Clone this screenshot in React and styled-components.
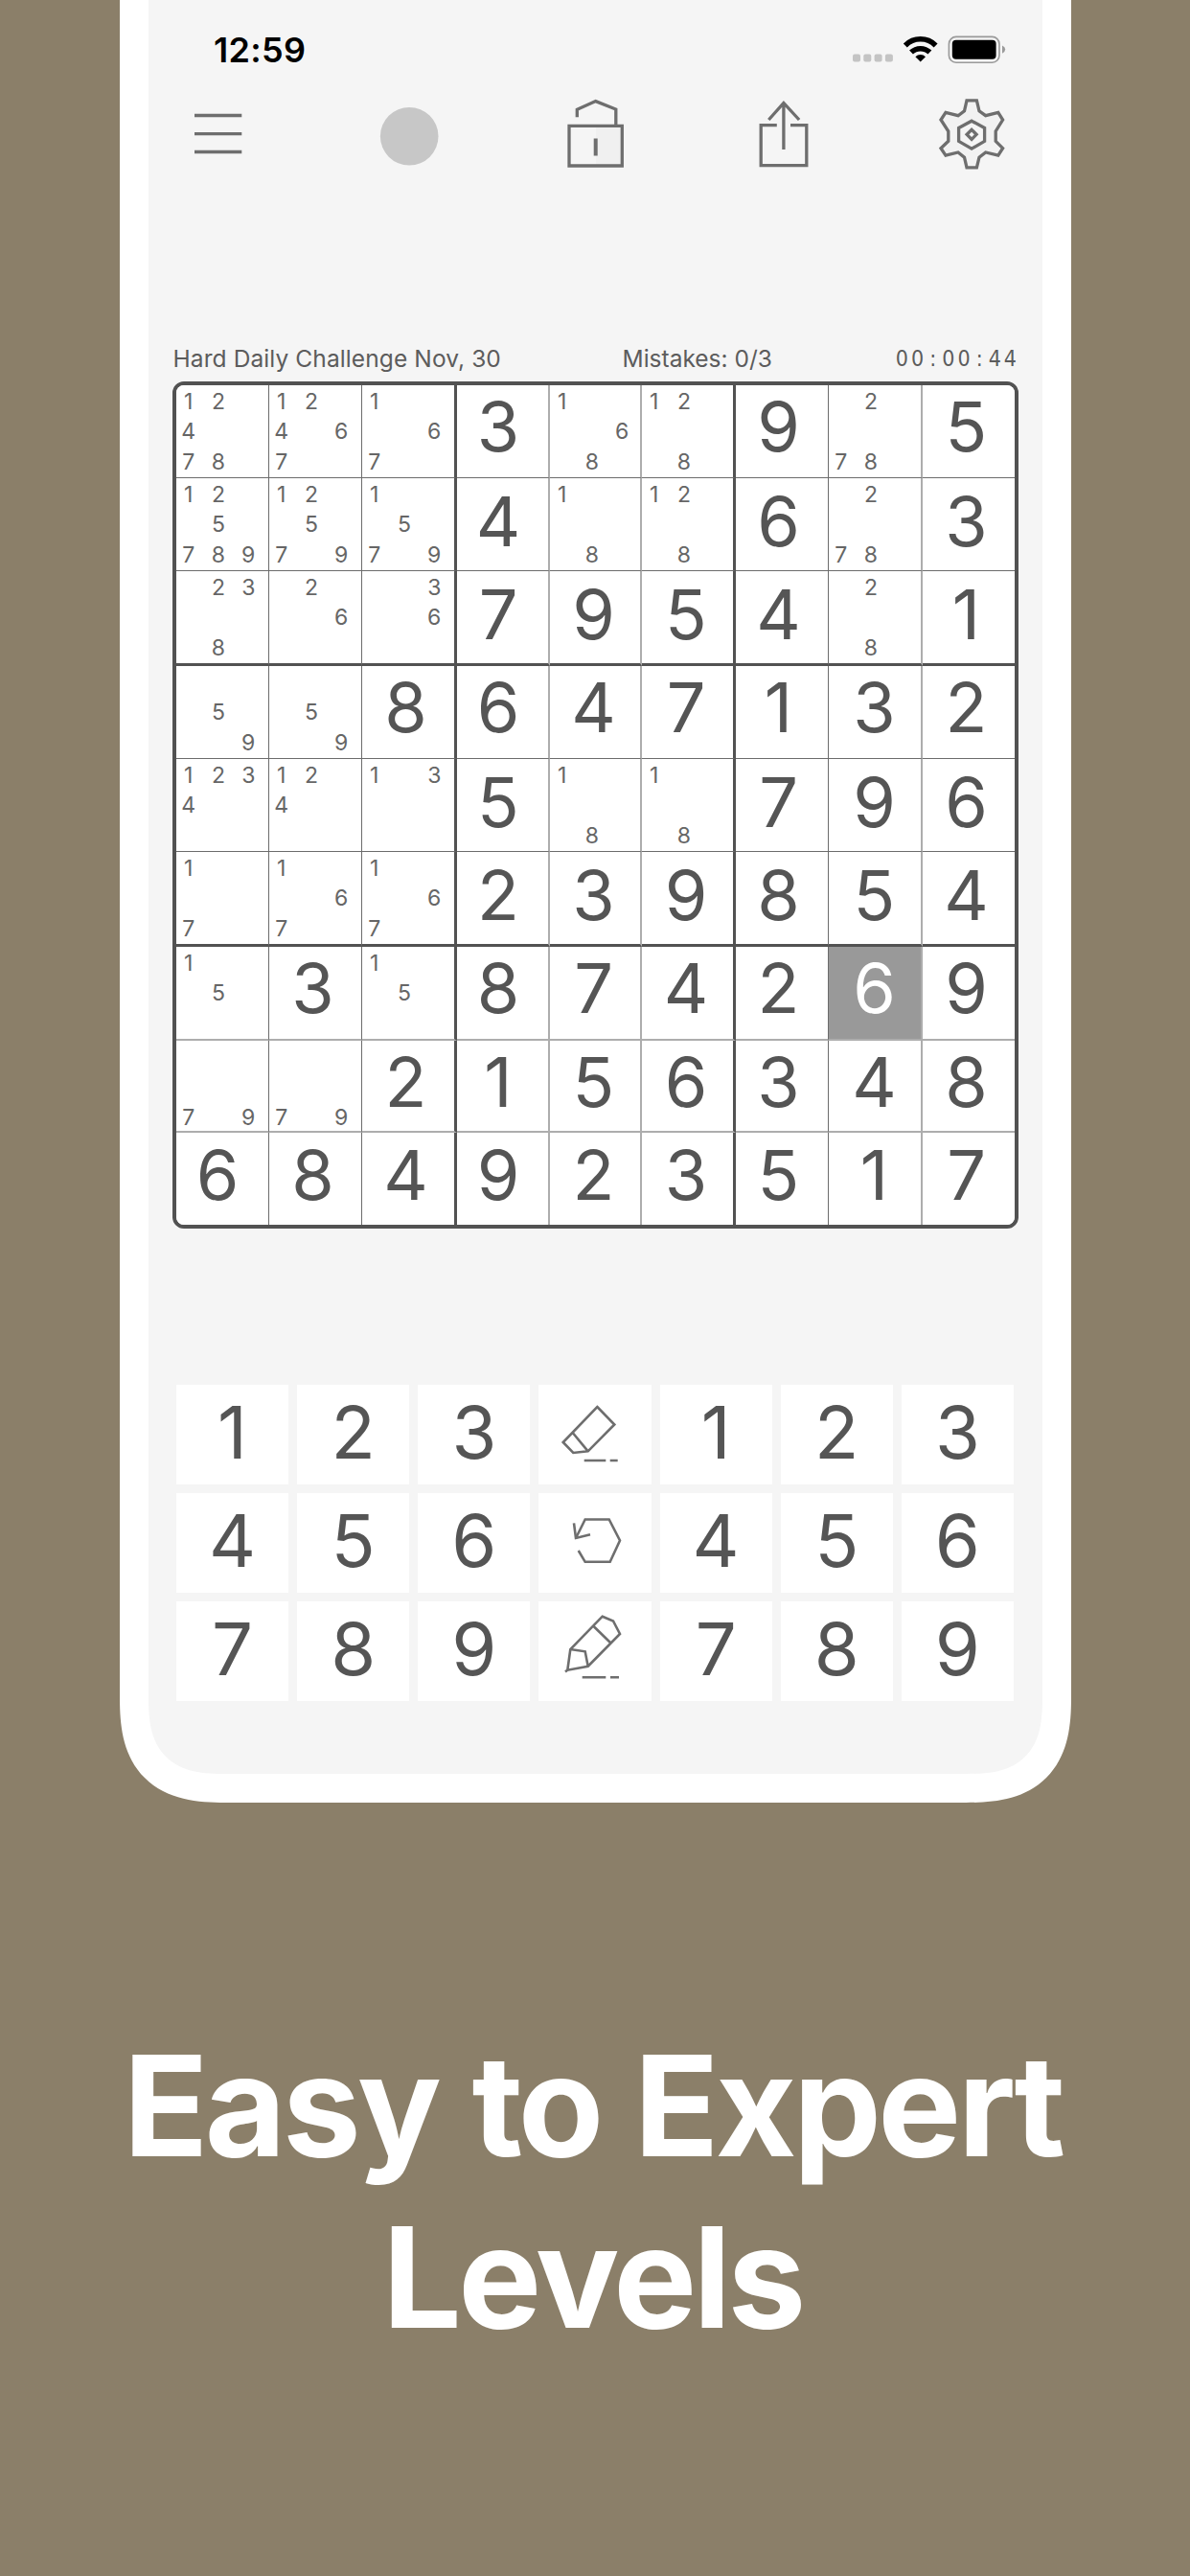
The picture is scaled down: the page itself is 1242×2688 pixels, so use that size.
import React from 'react';
import styled, { createGlobalStyle } from 'styled-components';

const GlobalStyle = createGlobalStyle`
  * {
    box-sizing: border-box;
  }

  body {
    margin: 0;
    background: #8b7f69;
    font-family: Inter, 'Liberation Sans', sans-serif;
    -webkit-font-smoothing: antialiased;
  }
`;

const Page = styled.main`
  display: flex;
  flex-direction: column;
  align-items: center;
  width: 1242px;
  height: 2688px;
  overflow: hidden;
  background: #8b7f69;
`;

const Phone = styled.section`
  width: 993px;
  height: 1881px;
  padding: 0 30px 30px;
  background: #fff;
  border-radius: 0 0 110px 110px;
  corner-shape: superellipse(1.365);
`;

const Screen = styled.div`
  height: 1851px;
  background: #f5f5f5;
  border-radius: 0 0 80px 80px;
  corner-shape: superellipse(1.44);
`;

const StatusBar = styled.header`
  display: flex;
  align-items: flex-start;
  justify-content: space-between;
  height: 96px;
  padding: 30px 36.5px 0 68.5px;
`;

const Clock = styled.time`
  font-size: 36px;
  line-height: 44px;
  font-weight: 600;
  letter-spacing: 0.3px;
  color: #000;
`;

const StatusIcons = styled.svg`
  display: block;
  width: 163px;
  height: 40px;
`;

const Toolbar = styled.nav`
  display: flex;
  justify-content: space-between;
  height: 88px;
  padding: 0 37.5px;
`;

const ToolButton = styled.button`
  display: flex;
  padding: 0;
  border: 0;
  background: none;

  svg {
    display: block;
    width: 72px;
    height: 88px;
    fill: none;
    stroke: #6e6e6e;
    stroke-width: 3.3;
  }
`;

const GameInfo = styled.div`
  display: grid;
  grid-template-columns: 469px 1fr auto;
  height: 60px;
  margin: 174px 28px 0 26px;
  color: #5c5c5c;
  font-size: 24.5px;
  line-height: 32px;
  white-space: nowrap;
`;

const InfoText = styled.span`
  letter-spacing: ${({ $tracking }) => $tracking}px;
`;

const Timer = styled.span`
  display: grid;
  grid-template-columns: repeat(8, 16.15px);
  height: 32px;
  margin-right: -3px;
  color: #5c5c5c;
  font-family: 'DejaVu Sans Condensed', 'DejaVu Sans', sans-serif;
  font-stretch: condensed;
  font-size: 23px;
  text-align: center;
`;

const Board = styled.div`
  display: grid;
  grid-template-columns: 97px 97px 99px 97px 96px 98px 97px 98px 96px;
  grid-template-rows: 97px 97px 99px 97px 97px 99px 98px 96px 96px;
  width: 883px;
  height: 884px;
  margin-left: 25.5px;
  margin-top: -20px;
  border: 4px solid #525252;
  border-radius: 12px;
  background: #fff;
  overflow: hidden;
`;

const Cell = styled.div`
  border-right: ${({ $right }) => $right};
  border-bottom: ${({ $bottom }) => $bottom};
  background: ${({ $selected }) => ($selected ? '#999' : '#fff')};
  color: ${({ $selected }) => ($selected ? '#fff' : '#555')};
  overflow: hidden;
`;

const Digit = styled.div`
  width: ${({ $width }) => $width}px;
  padding-top: ${({ $drop }) => $drop}px;
  font-size: 72px;
  line-height: 86px;
  text-align: center;
`;

const Notes = styled.div`
  display: grid;
  grid-template-columns: repeat(3, 31.3px);
  grid-auto-rows: 31.3px;
  margin: 2px 0 0 -3px;
  color: #666;
  font-size: 23px;
  line-height: 31px;
  text-align: center;
`;

const Keypad = styled.div`
  display: grid;
  grid-template-columns: repeat(7, 1fr);
  grid-auto-rows: 104px;
  gap: 9px;
  width: 874px;
  margin: 163px 0 0 29.5px;
`;

const Key = styled.button`
  display: flex;
  align-items: center;
  justify-content: center;
  padding: 0;
  border: 0;
  background: #fff;
  color: #555;
  font-family: inherit;

  svg {
    display: block;
    width: 117px;
    height: 104px;
    fill: none;
    stroke: #6e6e6e;
    stroke-width: 2.6;
  }
`;

const KeyLabel = styled.span`
  padding-bottom: 6px;
  font-size: 76px;
  line-height: 98px;
`;

const Headline = styled.h1`
  margin: 227px 5px 0 0;
  color: #fff;
  font-size: 146px;
  line-height: 179px;
  font-weight: 700;
  letter-spacing: -3.6px;
  word-spacing: 4px;
  text-align: center;
`;

// '3' is a filled digit, 'n1278' is a cell with pencil notes
const board = [
  ['n12478', 'n12467', 'n167', '3', 'n168', 'n128', '9', 'n278', '5'],
  ['n125789', 'n12579', 'n1579', '4', 'n18', 'n128', '6', 'n278', '3'],
  ['n238', 'n26', 'n36', '7', '9', '5', '4', 'n28', '1'],
  ['n59', 'n59', '8', '6', '4', '7', '1', '3', '2'],
  ['n1234', 'n124', 'n13', '5', 'n18', 'n18', '7', '9', '6'],
  ['n17', 'n167', 'n167', '2', '3', '9', '8', '5', '4'],
  ['n15', '3', 'n15', '8', '7', '4', '2', '6', '9'],
  ['n79', 'n79', '2', '1', '5', '6', '3', '4', '8'],
  ['6', '8', '4', '9', '2', '3', '5', '1', '7'],
];

const thin = '1px solid #6c6c6c';
const soft = '2px solid #adadad';
const thick = '3px solid #525252';

const columnLines = [thin, thin, thick, soft, soft, thick, thin, soft, '0'];
const rowLines = [thin, thin, thick, thin, thin, thick, soft, soft, '0'];
const digitWidths = [86, 91, 91, 86, 91, 92, 89, 95, 91];
const digitDrops = [0, 2, 2, 0, 2, 2, 0, 0, 1];

const selected = { row: 6, col: 7 };

const Menu = () => (
  <svg viewBox="192 96 72 88">
    <path d="M203 120.5H252.3M203 139.7H252.3M203 158.5H252.3" />
  </svg>
);

const Dot = () => (
  <svg viewBox="388.5 96 72 88">
    <circle cx="426.7" cy="142.2" r="30.3" fill="#c7c7c7" stroke="none" />
  </svg>
);

const Lock = () => (
  <svg viewBox="585 96 72 88">
    <path d="M622 133H648V172H622Z" fill="#f0f0f0" stroke="none" />
    <path d="M594 131.3H649.3V173H594ZM602.3 122.3V114.3L621.7 105.6L642.8 114V131" />
    <path d="M621.7 144.5V162.5" strokeWidth="4" />
  </svg>
);

const Share = () => (
  <svg viewBox="781.5 96 72 88">
    <path d="M810.3 130.7H793.7V172.6H841.3V130.7H824.5" />
    <path d="M817.4 156V107.5M801.8 125L817.4 107.5L833.6 125" />
  </svg>
);

const Gear = () => (
  <svg viewBox="978 96 72 88">
    <path
      fill="#f2f2f2"
      d="M1009 104.9H1019.4L1022 115.8L1028.7 120.7L1041.8 117.4L1046.6 125L1039.2 137V147.3L1046.6 154.7L1041.8 162.2L1028.7 159L1022 164.2L1019.4 174.8H1009L1006.5 164.2L1000 159L987 162.2L982 154.7L989.8 147.3V137L982 125L987 117.4L1000 120.7L1006.5 115.8Z"
    />
    <path fill="#f5f5f5" d="M1014.1 126.2L1027.6 133.6V147.4L1014.1 155.2L1000.6 147.4V133.6Z" />
    <path d="M1014.1 135.3L1019.1 140.3L1014.1 145.3L1009.1 140.3Z" />
  </svg>
);

const Eraser = () => (
  <svg viewBox="562 1445 117 104">
    <path d="M623.3 1468L641.3 1486.5L613.7 1514.3L598.3 1516L587.7 1505ZM597.7 1495L613.7 1514.3" />
    <path d="M609.7 1524H632.3M636.7 1524H644.7" />
  </svg>
);

const Undo = () => (
  <svg viewBox="562 1558 117 104">
    <path d="M603.7 1618L610.7 1629.8H636.7L647 1607.5L635.7 1585.5H610.7L601 1605" />
    <path d="M599 1589.3L601 1605L616 1601.3" />
  </svg>
);

const Pencil = () => (
  <svg viewBox="562 1671 117 104">
    <path d="M628.7 1686.7L640 1691.5L647 1705L613.7 1738.7L592.3 1742.7L595.3 1721ZM619.3 1696.7L637 1714M595.3 1721L610.7 1723.3L613.7 1738.7M590 1744.5L593 1742" />
    <path d="M607.7 1750.3H632.3M637 1750.3H646" />
  </svg>
);

const tools = [Menu, Dot, Lock, Share, Gear];

const keys = [
  [1, 2, 3, Eraser, 1, 2, 3],
  [4, 5, 6, Undo, 4, 5, 6],
  [7, 8, 9, Pencil, 7, 8, 9],
];

const BoardCell = ({ value, row, col }) => {
  const isNotes = value[0] === 'n';

  return (
    <Cell
      $right={columnLines[col]}
      $bottom={rowLines[row]}
      $selected={row === selected.row && col === selected.col}>
      {isNotes ? (
        <Notes>
          {[1, 2, 3, 4, 5, 6, 7, 8, 9].map(n => (
            <span key={n}>{value.includes(n) ? n : ''}</span>
          ))}
        </Notes>
      ) : (
        <Digit $width={digitWidths[col]} $drop={digitDrops[row]}>
          {value}
        </Digit>
      )}
    </Cell>
  );
};

const App = () => (
  <>
    <GlobalStyle />
    <Page>
      <Phone>
        <Screen>
          <StatusBar>
            <Clock>12:59</Clock>
            <StatusIcons viewBox="888 30 163 40">
              {[0, 1, 2, 3].map(i => (
                <rect key={i} x={890 + i * 11.3} y="56.5" width="8" height="8" rx="2" fill="#c4c4c4" />
              ))}
              <g fill="none" stroke="#000" strokeWidth="5.6">
                <path d="M944.8 47.4A22.5 22.5 0 0 1 976.6 47.4" />
                <path d="M951 54.6A14 14 0 0 1 970.4 54.6" />
              </g>
              <path d="M960.7 64.6L955.4 59.2A7.5 7.5 0 0 1 966 59.2Z" />
              <rect x="990.4" y="38.4" width="52.6" height="26.8" rx="7.5" fill="none" stroke="#9a9a9a" strokeWidth="1.6" />
              <rect x="993.8" y="41.8" width="45.8" height="20" rx="4" />
              <path d="M1046 47.5Q1049.2 49 1049.2 51.6T1046 55.8Z" fill="#9a9a9a" />
            </StatusIcons>
          </StatusBar>

          <Toolbar>
            {tools.map((Icon, i) => (
              <ToolButton key={i}>
                <Icon />
              </ToolButton>
            ))}
          </Toolbar>

          <GameInfo>
            <InfoText $tracking={0.1}>Hard Daily Challenge Nov, 30</InfoText>
            <InfoText $tracking={0}>Mistakes: 0/3</InfoText>
            <Timer>
              {'00:00:44'.split('').map((char, i) => (
                <span key={i}>{char}</span>
              ))}
            </Timer>
          </GameInfo>

          <Board>
            {board.map((cells, row) =>
              cells.map((value, col) => (
                <BoardCell key={`${row}-${col}`} value={value} row={row} col={col} />
              )),
            )}
          </Board>

          <Keypad>
            {keys.flat().map((Item, i) => (
              <Key key={i}>{typeof Item === 'number' ? <KeyLabel>{Item}</KeyLabel> : <Item />}</Key>
            ))}
          </Keypad>
        </Screen>
      </Phone>

      <Headline>
        Easy to Expert
        <br />
        Levels
      </Headline>
    </Page>
  </>
);

export default App;
